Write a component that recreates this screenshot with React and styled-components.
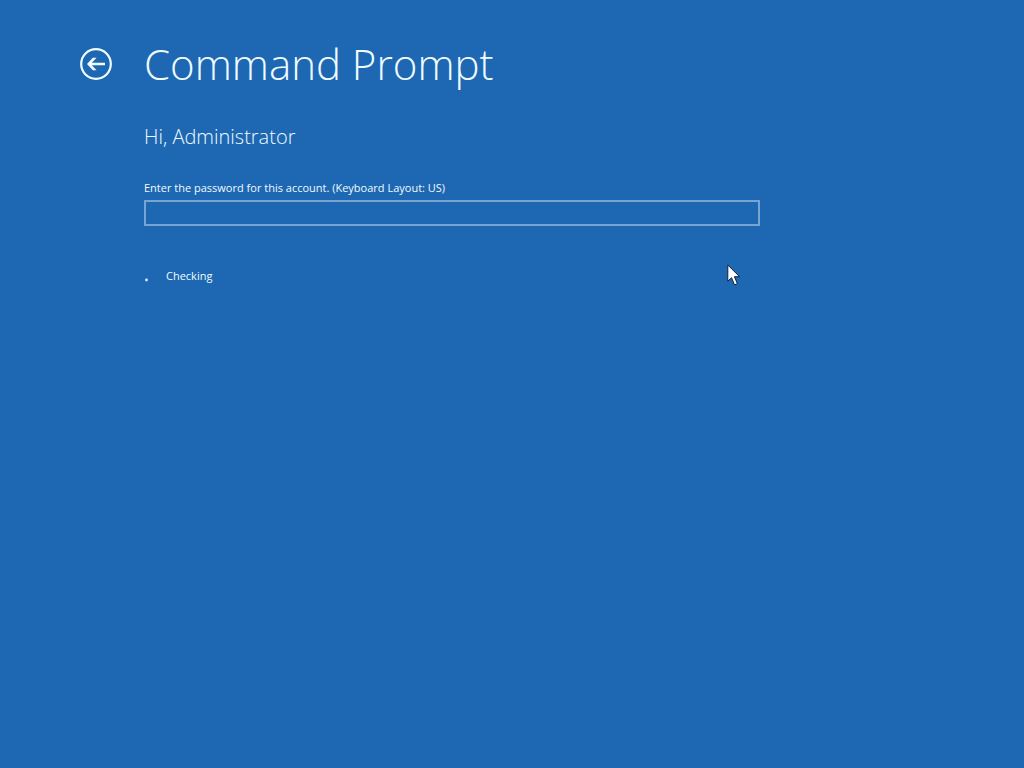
import React from 'react';
import styled, { createGlobalStyle } from 'styled-components';

const GlobalStyle = createGlobalStyle`
  * { box-sizing: border-box; }
  body {
    margin: 0;
    background: #1e67b2;
    color: #effcff;
    font-family: 'Open Sans', 'Noto Sans', sans-serif;
  }
`;

const Screen = styled.main`
  position: relative;
  min-height: 100vh;
  padding: 36px 80px;
`;

const Header = styled.header`
  display: flex;
  align-items: center;
  gap: 32px;
`;

const BackButton = styled.button`
  display: flex;
  flex: none;
  width: 32px;
  height: 32px;
  padding: 0;
  border: 0;
  background: none;
  color: inherit;
`;

const Title = styled.h1`
  margin: 0;
  font-size: 42px;
  line-height: 56px;
  font-weight: 300;
`;

const Content = styled.form`
  display: flex;
  flex-direction: column;
  max-width: 680px;
  margin-top: 30px;
  padding-left: 64px;
`;

const Greeting = styled.h2`
  margin: 0 0 26px;
  font-size: 20px;
  line-height: 30px;
  font-weight: 300;
`;

const Label = styled.label`
  margin-bottom: 2px;
  font-size: 11px;
  line-height: 20px;
`;

const PasswordInput = styled.input`
  width: 100%;
  height: 26px;
  padding: 0 6px;
  border: 2px solid #78a4d2;
  border-radius: 0;
  outline: none;
  background: transparent;
  color: inherit;
  font: inherit;
`;

const Status = styled.div`
  display: flex;
  align-items: center;
  gap: 6px;
  margin-top: 40px;
  font-size: 11px;
  line-height: 20px;
`;

const Spinner = styled.svg`
  flex: none;
  width: 16px;
  height: 16px;
`;

const Pointer = styled.svg`
  position: absolute;
  left: 727px;
  top: 264px;
  width: 14px;
  height: 23px;
  pointer-events: none;
`;

export default function App() {
  return (
    <Screen>
      <GlobalStyle />
      <Header>
        <BackButton type="button" aria-label="Back">
          <svg width="32" height="32" viewBox="0 0 32 32">
            <circle cx="16" cy="16" r="14.8" fill="none" stroke="currentColor" strokeWidth="2.2" />
            <path
              d="M7 16l5.8-6.2h3.8l-4.8 4.9H25v2.6H11.8l4.8 4.9h-3.8z"
              fill="currentColor"
            />
          </svg>
        </BackButton>
        <Title>Command Prompt</Title>
      </Header>
      <Content onSubmit={(event) => event.preventDefault()}>
        <Greeting>Hi, Administrator</Greeting>
        <Label htmlFor="password">Enter the password for this account. (Keyboard Layout: US)</Label>
        <PasswordInput id="password" type="password" />
        <Status role="status">
          <Spinner viewBox="0 0 16 16" aria-hidden="true">
            <circle cx="2.5" cy="12" r="1.4" fill="#d5f3ff" />
          </Spinner>
          Checking
        </Status>
      </Content>
      <Pointer viewBox="0 0 14 23" aria-hidden="true">
        <path
          d="M.8 1v16.2l3.7-3.5 3 7.2 2.9-1.2-3-7h5.2z"
          fill="#fff"
          stroke="#10203c"
          strokeWidth="1"
          strokeLinejoin="round"
        />
      </Pointer>
    </Screen>
  );
}
